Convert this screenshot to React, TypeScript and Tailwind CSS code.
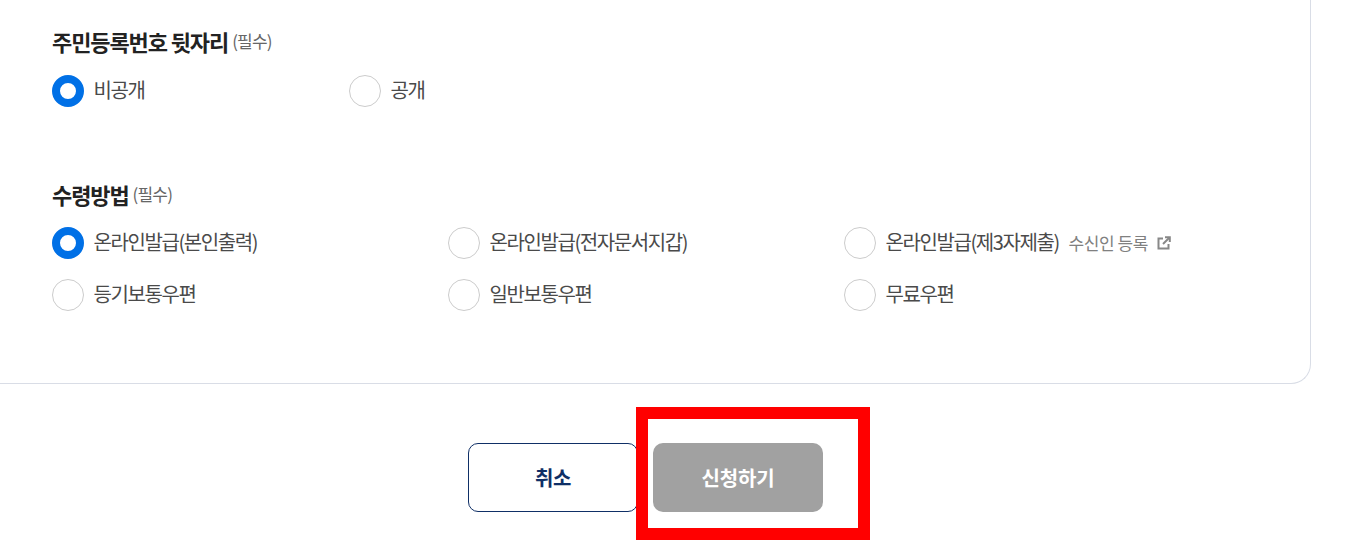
import React from "react";

const font = { fontFamily: '"Noto Sans CJK KR", "Noto Sans", sans-serif' };

function Radio({ label, checked, width, extra }: { label: string; checked?: boolean; width: string; extra?: React.ReactNode }) {
  return (
    <div className={`flex items-center h-8 ${width}`}>
      {checked ? (
        <span className="w-8 h-8 rounded-full shrink-0 bg-white border-[8px] border-[#0070e6]" />
      ) : (
        <span className="w-8 h-8 rounded-full shrink-0 bg-white border border-[#cccccc]" />
      )}
      <span className="ml-[9.5px] pb-[3px] text-[20px] leading-[29px] tracking-[-1.4px] text-[#4a4a4a] whitespace-nowrap">{label}</span>
      {extra}
    </div>
  );
}

function Heading({ title }: { title: string }) {
  return (
    <div className="flex items-center h-[26px]">
      <span className="text-[22px] font-bold tracking-[-1.1px] text-[#222222] leading-[26px]">{title}</span>
      <span className="ml-[4px] text-[17px] tracking-[-0.8px] text-[#666666] leading-[26px]">(필수)</span>
    </div>
  );
}

export default function App() {
  return (
    <div className="relative w-[1366px] h-[544px] overflow-hidden bg-white" style={font}>
      <div className="w-[1311px] h-[384px] pl-[52px] pt-[28px] border-r border-b border-[#d9dde6] rounded-br-[20px]">
        <Heading title="주민등록번호 뒷자리" />
        <div className="flex mt-[21px]">
          <Radio label="비공개" checked width="w-[297px]" />
          <Radio label="공개" width="w-[200px]" />
        </div>
        <div className="mt-[74px]">
          <Heading title="수령방법" />
        </div>
        <div className="flex mt-[20px]">
          <Radio label="온라인발급(본인출력)" checked width="w-[396px]" />
          <Radio label="온라인발급(전자문서지갑)" width="w-[396px]" />
          <Radio
            label="온라인발급(제3자제출)"
            width="w-[400px]"
            extra={
              <span className="flex items-center ml-[9.5px] text-[17px] tracking-[-0.4px] text-[#808080] whitespace-nowrap">
                수신인 등록
                <svg className="ml-[9px]" width="14" height="14" viewBox="0 0 14 14" fill="none" stroke="#888888" strokeWidth="2">
                  <path d="M6 2.5H1.5V12.5H11.5V8" />
                  <path d="M8 1.2H12.8V6" />
                  <path d="M12.5 1.5L6 8" />
                </svg>
              </span>
            }
          />
        </div>
        <div className="flex mt-[20px]">
          <Radio label="등기보통우편" width="w-[396px]" />
          <Radio label="일반보통우편" width="w-[396px]" />
          <Radio label="무료우편" width="w-[400px]" />
        </div>
      </div>
      <div className="flex justify-start gap-[15px] mt-[59px] ml-[468px]">
        <button className="w-[170px] h-[69px] rounded-[10px] border border-[#0f2f66] bg-white text-[#0f2f66] text-[20px] font-bold tracking-[-0.4px]">취소</button>
        <button className="w-[170px] h-[69px] rounded-[10px] bg-[#a1a1a1] text-white text-[20px] font-bold tracking-[-0.2px]">신청하기</button>
      </div>
      <div className="absolute left-[636px] top-[407px] w-[234px] h-[133px] border-[12px] border-[#ff0000]" />
    </div>
  );
}
